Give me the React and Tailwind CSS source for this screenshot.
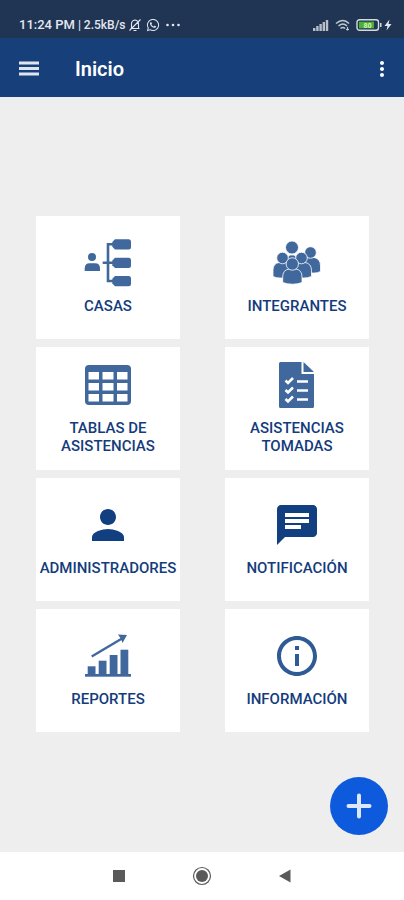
import React from "react";
import { MdPerson, MdChat, MdInfoOutline, MdMoreVert } from "react-icons/md";
import { FaWhatsapp } from "react-icons/fa";

function HousesIcon() {
  return (
    <svg viewBox="0 0 48 48" className="size-12 text-[#40689c]" fill="currentColor" aria-hidden="true">
      <circle cx="8" cy="18" r="4" />
      <path d="M0.7 32v-2.5q0-5.2 5-5.2h5.3q5 0 5 5.2v2.5z" />
      <path d="M18.7 23.8H30M30 5.3H24v36.7H30" fill="none" stroke="currentColor" strokeWidth="2.6" />
      <path d="M31 0.3h13.5q2.5 0 2.5 2.5v5.2q0 2.5-2.5 2.5H31l-2.700-2.700V3z" />
      <path d="M31 18.7h13.5q2.5 0 2.5 2.5v5.2q0 2.5-2.5 2.500H31l-2.700-2.700v-4.800z" />
      <path d="M31 37h13.5q2.5 0 2.5 2.5v5.2q0 2.5-2.5 2.500H31l-2.700-2.700v-4.800z" />
    </svg>
  );
}

function MembersIcon() {
  return (
    <svg viewBox="0 0 48 48" className="size-12 text-[#40689c]" fill="currentColor" stroke="white" strokeWidth="0.8" aria-hidden="true">
      <path d="M14 30v-8q0-5 3-6h4q3 1 3 6v8z" />
      <circle cx="19" cy="8.5" r="6.5" />
      <path d="M30 34V26q0-7 4.5-7.5h6.5q6.5 1 6.5 8.5v5.5q-3 1.5-6 1.5z" />
      <circle cx="37.5" cy="13.5" r="5.8" />
      <path d="M19 39V31q0-6.500 6-7.500h7q6.500 1 6.500 8v6q-4 1.500-8 1.500z" />
      <circle cx="28.5" cy="19" r="5.8" />
      <path d="M0 37.500V31q0-6.500 6-7.500h7q6 1 6 7.500v8H7q-4 0-7-1.500z" />
      <circle cx="9.5" cy="19" r="5.8" />
      <path d="M9.700 43.500V38q0-7 6.300-8h7q6 1 6 8v5.500q-4 1.700-9.500 1.700t-9.800-1.700z" />
      <circle cx="19.3" cy="25" r="6.2" />
    </svg>
  );
}

function TableIcon() {
  return (
    <svg viewBox="0 0 48 48" className="size-12 text-[#40689c]" fill="currentColor" aria-hidden="true">
      <rect x="1" y="4" width="46" height="40" rx="4" />
      <g fill="white">
        <rect x="4.5" y="11" width="10.5" height="7.5" />
        <rect x="18.5" y="11" width="11" height="7.5" />
        <rect x="33" y="11" width="10.5" height="7.5" />
        <rect x="4.5" y="22" width="10.5" height="7.5" />
        <rect x="18.5" y="22" width="11" height="7.5" />
        <rect x="33" y="22" width="10.5" height="7.5" />
        <rect x="4.5" y="33" width="10.5" height="7.5" />
        <rect x="18.5" y="33" width="11" height="7.5" />
        <rect x="33" y="33" width="10.5" height="7.5" />
      </g>
    </svg>
  );
}

function ChecklistIcon() {
  return (
    <svg viewBox="0 0 48 48" className="size-12 text-[#40689c]" fill="currentColor" aria-hidden="true">
      <path d="M7.5 1H28.5V13H41v32.500q0 1.500-1.500 1.500h-32Q6 47 6 45.500v-43Q6 1 7.500 1z" />
      <path d="M30.500 1l10.500 10H30.500z" />
      <g fill="none" stroke="white" strokeWidth="2.6">
        <path d="M12.500 19.500l2.500 2.500 5-5M12.500 29l2.500 2.500 5-5M12.500 38l2.500 2.500 5-5" />
        <path d="M24 20.500h11M24 29.500h11M24 38.500h11" />
      </g>
    </svg>
  );
}

function ReportsIcon() {
  return (
    <svg viewBox="0 0 48 48" className="size-12 text-[#40689c]" fill="currentColor" aria-hidden="true">
      <rect x="1" y="42" width="46" height="2.7" />
      <rect x="3.7" y="34.3" width="7.8" height="8" />
      <rect x="14.7" y="28.7" width="7.8" height="14" />
      <rect x="25.7" y="23" width="7.8" height="20" />
      <rect x="36.5" y="17.7" width="7.8" height="25" />
      <path d="M7.700 24.500L38 6.500" fill="none" stroke="currentColor" strokeWidth="2.4" />
      <path d="M34 2.500l9 .5-4.500 8-1.500-4z" />
    </svg>
  );
}

const cards = [
  { label: "CASAS", icon: <HousesIcon /> },
  { label: "INTEGRANTES", icon: <MembersIcon /> },
  { label: "TABLAS DE ASISTENCIAS", icon: <TableIcon /> },
  { label: "ASISTENCIAS TOMADAS", icon: <ChecklistIcon /> },
  { label: "ADMINISTRADORES", icon: <MdPerson className="size-12 text-[#123f80]" /> },
  { label: "NOTIFICACIÓN", icon: <MdChat className="size-12 text-[#123f80]" /> },
  { label: "REPORTES", icon: <ReportsIcon /> },
  { label: "INFORMACIÓN", icon: <MdInfoOutline className="size-12 text-[#2f5b94]" /> },
];

function StatusBar() {
  return (
    <div className="flex h-[38px] items-center justify-between bg-[#203554] pt-3 pr-3 pl-[19px] text-[#e4e8ee]">
      <div className="flex items-center">
        <span className="text-[13px] font-medium">11:24 PM</span>
        <span className="ml-[3px] text-xs font-medium">| 2.5kB/s</span>
        <svg viewBox="0 0 14 14" className="ml-[2px] size-[14px]" fill="none" stroke="currentColor" strokeWidth="1.1" aria-hidden="true">
          <path d="M2.500 10.500h9M3.500 10.500V6q0-3.500 3.500-4 3.500.500 3.500 4v4.500M5.500 12.500h3M1.500 12.500l11-11" />
        </svg>
        <FaWhatsapp className="ml-1 size-[14px]" aria-hidden="true" />
        <svg viewBox="0 0 14 4" className="ml-[6px] h-1 w-[14px]" fill="currentColor" aria-hidden="true">
          <circle cx="1.5" cy="2" r="1.3" />
          <circle cx="7" cy="2" r="1.3" />
          <circle cx="12.5" cy="2" r="1.3" />
        </svg>
      </div>
      <div className="flex items-center">
        <svg viewBox="0 0 16 12" className="h-3 w-4" fill="#b9bfc9" aria-hidden="true">
          <path d="M0 9h2.400v3H0zM3.200 7h2.400v5H3.200zM6.400 5h2.400v7H6.400zM9.600 3H12v9H9.600zM12.800 1h2.400v11h-2.400z" />
        </svg>
        <svg viewBox="0 0 16 12" className="ml-[6px] h-3 w-4" fill="none" stroke="#c5cad2" strokeWidth="1.5" aria-hidden="true">
          <path d="M1 4.500q7-6 13 0M3.500 7q4.500-4 8.500 0M5.500 9.500q2.500-2 4.500 0" />
          <path d="M12.500 8v3.500M11 10.500h3" strokeWidth="1.2" />
        </svg>
        <svg viewBox="0 0 26 12" className="ml-[5px] h-3 w-[26px]" aria-hidden="true">
          <rect x="1" y="0.7" width="21.5" height="10.6" rx="2.5" fill="#203554" stroke="#d5dae0" strokeWidth="1.4" />
          <rect x="3" y="2.7" width="15" height="6.6" fill="#4fb030" />
          <rect x="24" y="4" width="1.5" height="4" fill="#d5dae0" />
          <text x="11.5" y="8.6" fontSize="7" fontWeight="700" textAnchor="middle" fill="#d4f5c4">80</text>
        </svg>
        <svg viewBox="0 0 8 12" className="ml-[2px] h-3 w-2" fill="currentColor" aria-hidden="true">
          <path d="M5.500 0.500L0.500 7h3L2.500 11.500 7.500 5h-3z" />
        </svg>
      </div>
    </div>
  );
}

export default function App() {
  return (
    <div className="flex min-h-screen flex-col bg-[#eeeeee] font-[Roboto,sans-serif]">
      <StatusBar />
      <header className="flex h-[59px] items-center bg-[#173f7a] pt-[2px] pr-[10px] pl-[19px] text-white">
        <button type="button" aria-label="Menú" className="text-[#dfe5f0]">
          <svg viewBox="0 0 20 16" className="h-4 w-5" fill="currentColor" aria-hidden="true">
            <path d="M0 0.500h20v3H0zM0 6h20v3H0zM0 11.500h20v3H0z" />
          </svg>
        </button>
        <h1 className="ml-9 flex-1 text-xl font-semibold">Inicio</h1>
        <button type="button" aria-label="Más opciones">
          <MdMoreVert className="size-6" />
        </button>
      </header>
      <main className="relative flex-1 pt-[119px] pr-[35px] pb-[120px] pl-9">
        <div className="grid grid-cols-2 gap-x-[45px] gap-y-2">
          {cards.map((card) => (
            <button
              key={card.label}
              type="button"
              className="flex h-[123px] flex-col items-center justify-center gap-[10px] bg-white pb-[2px] text-[15px] leading-[18px] font-medium text-[#143c7c]"
            >
              {card.icon}
              <span className="max-w-[140px]">{card.label}</span>
            </button>
          ))}
        </div>
        <button
          type="button"
          aria-label="Agregar"
          className="absolute right-4 bottom-[17px] flex size-[58px] items-center justify-center rounded-full bg-[#0d5bdc] text-[#dce8fc]"
        >
          <svg viewBox="0 0 26 26" className="size-[26px]" fill="none" stroke="currentColor" strokeWidth="4" strokeLinecap="round" aria-hidden="true">
            <path d="M13 2.500v21M2.500 13h21" />
          </svg>
        </button>
      </main>
      <nav className="flex h-12 items-center justify-center gap-[66px] bg-white text-[#5a5a5a]">
        <button type="button" aria-label="Recientes">
          <svg viewBox="0 0 14 14" className="size-[14px]" fill="currentColor">
            <rect x="1" y="1" width="12" height="12" />
          </svg>
        </button>
        <button type="button" aria-label="Inicio">
          <svg viewBox="0 0 20 20" className="size-5" fill="currentColor">
            <circle cx="10" cy="10" r="6" />
            <circle cx="10" cy="10" r="8.5" fill="none" stroke="currentColor" strokeWidth="1.2" />
          </svg>
        </button>
        <button type="button" aria-label="Atrás">
          <svg viewBox="0 0 14 14" className="size-[14px]" fill="currentColor">
            <path d="M1 7L12.500 0.500v13z" />
          </svg>
        </button>
      </nav>
    </div>
  );
}
